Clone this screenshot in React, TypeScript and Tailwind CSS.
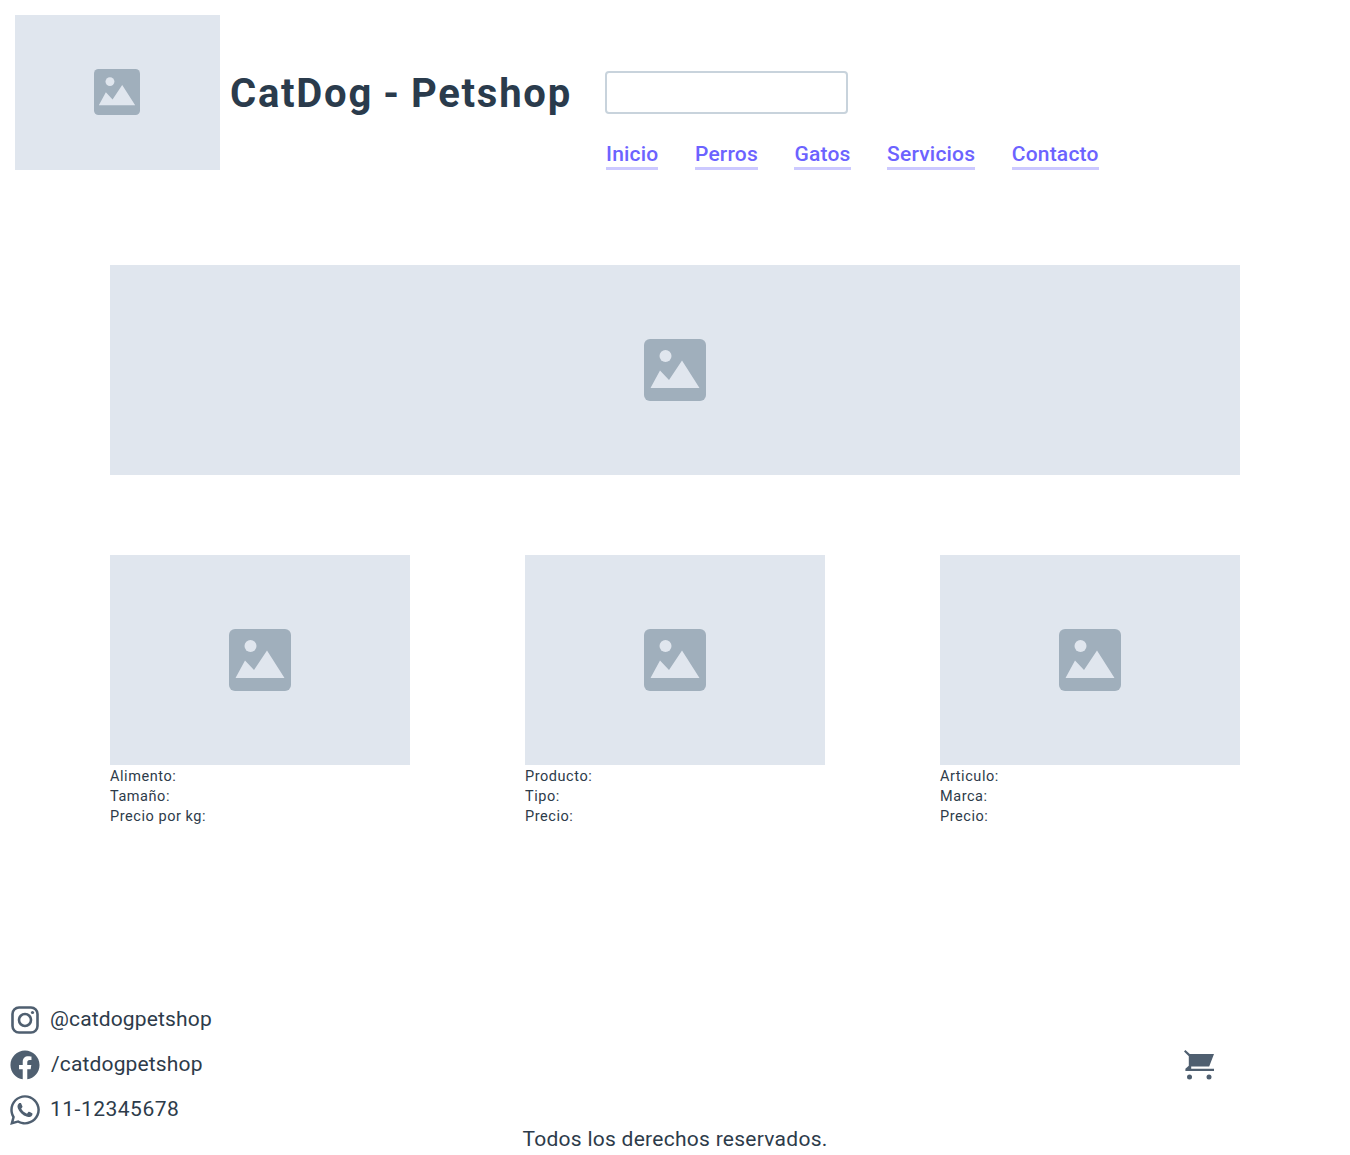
import { FaFacebook, FaWhatsapp } from "react-icons/fa";

function Ph({ className, size }: { className: string; size: string }) {
  return (
    <div className={`flex items-center justify-center bg-[#e0e6ee] ${className}`}>
      <svg viewBox="0 0 62 62" className={size}>
        <rect width="62" height="62" rx="6" fill="#a0afbc" />
        <circle cx="21.5" cy="17" r="6" fill="#e0e6ee" />
        <path d="M6.5 49 16 31.5 25 41 38 21.5 55.5 49Z" fill="#e0e6ee" />
      </svg>
    </div>
  );
}

const links = ["Inicio", "Perros", "Gatos", "Servicios", "Contacto"];
const cards = [
  ["Alimento:", "Tamaño:", "Precio por kg:"],
  ["Producto:", "Tipo:", "Precio:"],
  ["Articulo:", "Marca:", "Precio:"],
];

export default function App() {
  return (
    <div className="h-[1155px] overflow-hidden bg-white text-[#2d3b4a] font-['Roboto',sans-serif]">
      <header className="flex items-start pl-[15px] pt-[15px]">
        <Ph className="h-[155px] w-[205px]" size="mb-px mr-px h-[46px] w-[46px]" />
        <h1 className="ml-[10px] mt-[52px] w-[350px] whitespace-nowrap text-[40px] leading-[54px] font-bold tracking-[1.75px] [word-spacing:-1.5px] text-[#2a3b4c]">CatDog - Petshop</h1>
        <div className="ml-[25px] pt-[56px]">
          <input className="block h-[43px] w-[243px] rounded-[4px] border-[2.5px] border-[#c8d3dc] bg-white" aria-label="Buscar" />
          <nav className="ml-px mt-[27px] flex gap-[36.5px]">
            {links.map((l) => (
              <a key={l} className="border-b-[3px] border-[#6c63ff]/35 text-[21px] leading-[26px] font-medium tracking-[0.2px] text-[#6c63ff]">{l}</a>
            ))}
          </nav>
        </div>
      </header>
      <main className="px-[110px]">
        <Ph className="mt-[95px] h-[210px]" size="w-[62px] h-[62px]" />
        <div className="mt-[80px] flex justify-between">
          {cards.map((c, i) => (
            <div key={i} className="w-[300px]">
              <Ph className="h-[210px]" size="w-[62px] h-[62px]" />
              <div className="mt-[2px] text-[14.5px] leading-[20px] tracking-[0.55px]">
                {c.map((t, j) => <p key={j}>{t}</p>)}
              </div>
            </div>
          ))}
        </div>
      </main>
      <footer className="mt-[170px]">
        <div className="flex items-center justify-between pl-[10px] pr-[136px]">
          <div className="flex flex-col text-[21px] leading-[45px] tracking-[0.15px]">
            <div className="flex items-center gap-[10px]">
              <svg viewBox="0 0 30 30" className="h-[30px] w-[30px] text-[#4f5f70]" fill="none" stroke="currentColor">
                <rect x="2.5" y="2.5" width="25" height="25" rx="6.5" strokeWidth="2.6" />
                <circle cx="15" cy="15" r="6" strokeWidth="2.6" />
                <circle cx="22.5" cy="7.5" r="1.6" fill="currentColor" stroke="none" />
              </svg>
              <span>@catdogpetshop</span>
            </div>
            <div className="flex items-center gap-[11px]"><FaFacebook className="h-[30px] w-[30px] text-[#4f5f70]" /><span>/catdogpetshop</span></div>
            <div className="flex items-center gap-[10px]"><FaWhatsapp className="-mx-[2px] h-[34px] w-[34px] text-[#4f5f70]" /><span className="tracking-[0.5px]">11-12345678</span></div>
          </div>
          <svg viewBox="0 0 30 30" className="h-[30px] w-[30px] text-[#4f5f70]">
            <path fill="currentColor" d="M0 1.4 1.4 0l4.4 4H30l-4.8 12.6H7.2v2.2H30v2.2H1.4v-2.2l3.4-3V6.2L0 1.4Z" />
            <circle cx="5.5" cy="27" r="2.5" fill="currentColor" />
            <circle cx="25" cy="27" r="2.5" fill="currentColor" />
          </svg>
        </div>
        <p className="-mt-[7px] text-center text-[21px] leading-[28px] tracking-[0.27px]">Todos los derechos reservados.</p>
      </footer>
    </div>
  );
}
